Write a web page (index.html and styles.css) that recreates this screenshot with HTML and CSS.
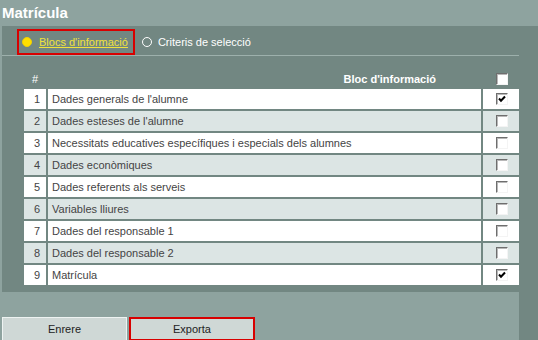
FILE: index.html
```html
<!DOCTYPE html>
<html lang="ca">

<head>
    <meta http-equiv="Content-Type" content="text/html; charset=utf-8">
    <title>Matrícula</title>
    <link rel="stylesheet" href="styles.css">
</head>

<body>
    <div class="title">Matrícula</div>
    <div class="layout">
        <div class="content">
            <div class="panel">
                <div class="tabs">
                    <a href="#" class="tab tab-active"><span class="dot dot-on"></span><span class="tab-label">Blocs d'informació</span></a>
                    <span class="tab"><span class="dot"></span>Criteris de selecció</span>
                </div>
                <div class="blocks">
                    <div class="row row-head">
                        <div class="num">#</div>
                        <div class="name">Bloc d'informació</div>
                        <div class="check"><span class="box"></span></div>
                    </div>
                    <div class="row">
                        <div class="num">1</div>
                        <div class="name">Dades generals de l'alumne</div>
                        <div class="check"><span class="box"><svg width="8" height="8" viewBox="0 0 8 8"><path d="M1 3.5 L3 5.8 L7 1.5" fill="none" stroke="#000" stroke-width="2"/></svg></span></div>
                    </div>
                    <div class="row row-alt">
                        <div class="num">2</div>
                        <div class="name">Dades esteses de l'alumne</div>
                        <div class="check"><span class="box"></span></div>
                    </div>
                    <div class="row">
                        <div class="num">3</div>
                        <div class="name">Necessitats educatives específiques i especials dels alumnes</div>
                        <div class="check"><span class="box"></span></div>
                    </div>
                    <div class="row row-alt">
                        <div class="num">4</div>
                        <div class="name">Dades econòmiques</div>
                        <div class="check"><span class="box"></span></div>
                    </div>
                    <div class="row">
                        <div class="num">5</div>
                        <div class="name">Dades referents als serveis</div>
                        <div class="check"><span class="box"></span></div>
                    </div>
                    <div class="row row-alt">
                        <div class="num">6</div>
                        <div class="name">Variables lliures</div>
                        <div class="check"><span class="box"></span></div>
                    </div>
                    <div class="row">
                        <div class="num">7</div>
                        <div class="name">Dades del responsable 1</div>
                        <div class="check"><span class="box"></span></div>
                    </div>
                    <div class="row row-alt">
                        <div class="num">8</div>
                        <div class="name">Dades del responsable 2</div>
                        <div class="check"><span class="box"></span></div>
                    </div>
                    <div class="row">
                        <div class="num">9</div>
                        <div class="name">Matrícula</div>
                        <div class="check"><span class="box"><svg width="8" height="8" viewBox="0 0 8 8"><path d="M1 3.5 L3 5.8 L7 1.5" fill="none" stroke="#000" stroke-width="2"/></svg></span></div>
                    </div>
                </div>
            </div>
            <div class="actions">
                <button class="btn">Enrere</button>
                <button class="btn btn-focus">Exporta</button>
            </div>
        </div>
        <div class="side"></div>
    </div>
</body>

</html>
```

FILE: styles.css
```css
body {
    margin: 0;
    background: #8ea39f;
    font-family: "Liberation Sans", Arial, sans-serif;
    font-size: 11px;
    overflow: hidden;
}

.title {
    height: 26px;
    line-height: 26px;
    padding-left: 2px;
    font-size: 15px;
    font-weight: bold;
    color: #fff;
}

.layout {
    display: flex;
    height: 314px;
}

.content {
    width: 517px;
    padding-left: 2px;
}

.side {
    flex: 1;
    background: #728782;
}

/* panell fosc */
.panel {
    background: #728782;
    padding-bottom: 5px;
}

.tabs {
    display: flex;
    align-items: flex-start;
    height: 26px;
    padding: 3px 0 0 15px;
    border-bottom: 1px solid #9db0ac;
}

.tab {
    display: flex;
    align-items: center;
    height: 26px;
    color: #fff;
}

.tab-active {
    box-sizing: border-box;
    border: 2px solid #d80000;
    padding: 0 5px 0 3px;
    margin-right: 7px;
    color: #f0e23c;
}

.tab-label {
    text-decoration: underline;
}

.dot {
    box-sizing: border-box;
    width: 10px;
    height: 10px;
    border: 1px solid #fff;
    border-radius: 50%;
    margin-right: 6px;
}

.dot-on {
    border-color: #f0d000;
    background: #ffe000;
    margin-right: 7px;
}

/* taula de blocs */
.blocks {
    margin: 14px 0 0 22px;
}

.row {
    display: grid;
    grid-template-columns: 22px 1fr 36px;
    column-gap: 2px;
    height: 20px;
    margin-bottom: 2px;
    color: #444;
}

.row > div {
    display: flex;
    align-items: center;
    background: #fff;
}

.row-alt > div {
    background: #dce5e4;
}

.row-head {
    height: 17px;
    color: #fff;
}

.row-head > div {
    background: none;
}

.row-head .name {
    justify-content: flex-end;
    padding-right: 45px;
    font-weight: bold;
}

.row-head .num {
    justify-content: center;
    padding-right: 0;
}

.num {
    justify-content: flex-end;
    padding-right: 6px;
}

.name {
    padding-left: 4px;
}

.check {
    justify-content: center;
}

.box {
    box-sizing: border-box;
    display: flex;
    align-items: center;
    justify-content: center;
    width: 12px;
    height: 12px;
    margin-left: 1px;
    background: #fff;
    border: 1px solid;
    border-color: #6e6e6e #f4f4f4 #f4f4f4 #6e6e6e;
    box-shadow: inset 1px 1px 0 #b8b8b8;
}

/* botons */
.actions {
    display: flex;
    gap: 2px;
    padding-top: 25px;
}

.btn {
    box-sizing: border-box;
    height: 24px;
    width: 125px;
    margin: 0;
    padding: 0;
    background: #cfd8d6;
    border: 1px solid #eef3f2;
    font-family: "Liberation Sans", Arial, sans-serif;
    font-size: 11px;
    color: #222;
}

.btn-focus {
    width: 126px;
    border: 2px solid #d80000;
}
```
